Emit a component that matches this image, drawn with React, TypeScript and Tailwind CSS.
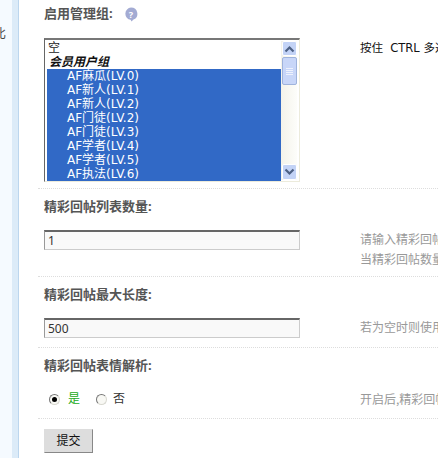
import React from "react";

const FONT = "font-['Noto_Sans','Noto_Sans_CJK_SC',sans-serif]";
const LATIN = "font-['DejaVu_Sans','Noto_Sans_CJK_SC',sans-serif]";
const groups = ["AF麻瓜(LV.0)", "AF新人(LV.1)", "AF新人(LV.2)", "AF门徒(LV.2)", "AF门徒(LV.3)", "AF学者(LV.4)", "AF学者(LV.5)", "AF执法(LV.6)"];

function Heading({ children }: { children: React.ReactNode }) {
  return <div className="flex h-9 items-center pl-1.5 text-[13px] font-bold text-[#555555]">{children}</div>;
}

function Field({ value, notes }: { value: string; notes: string[] }) {
  return (
    <div className="mt-[5px] flex pl-1.5">
      <div className="h-5 w-[256px] shrink-0 border border-t-2 border-[#cccccc] border-t-[#666666] border-l-[#999999] bg-[#f9f9f9] pl-[3px] text-xs leading-[17px] text-[#333333]">
        {value}
      </div>
      <div className="ml-[60px] whitespace-nowrap text-xs leading-5 text-[#999999]">
        {notes.map((n) => (
          <div key={n}>{n}</div>
        ))}
      </div>
    </div>
  );
}

function Radio({ checked }: { checked?: boolean }) {
  return (
    <span className="flex h-[11px] w-[11px] items-center justify-center rounded-full border border-[#d8d8d0] border-t-[#777777] border-l-[#777777] bg-[#f8f8f4]">
      {checked && <span className="h-[5px] w-[5px] rounded-full bg-black" />}
    </span>
  );
}

function Arrow({ up }: { up?: boolean }) {
  return (
    <svg width="11" height="8" viewBox="0 0 11 8">
      <path d={up ? "M1.5 6.5 L5.5 2.5 L9.5 6.5" : "M1.5 1.5 L5.5 5.5 L9.5 1.5"} fill="none" stroke="#4d6185" strokeWidth="2.2" />
    </svg>
  );
}

export default function App() {
  return (
    <div className={`${FONT} flex h-[458px] w-[438px] overflow-hidden bg-white`}>
      <div className="flex w-[19px] shrink-0 overflow-hidden bg-[#f5faff]">
        <div className="w-3 shrink-0 overflow-hidden pt-[24px] text-xs leading-5 text-[#444444]">
          <span className="-ml-[6px] block">比</span>
        </div>
        <div className="w-[7px] border-r border-[#bcd6ee] bg-[#dcebf8]" />
      </div>

      <div className="min-w-0 flex-1 pl-[19px]">
        <div className="w-[440px] border-b border-dotted border-[#dddddd] pb-1.5">
          <div className="flex h-7 items-center gap-[11px] pl-1.5 text-[13px] font-bold text-[#555555]">
            <span>启用管理组:</span>
            <svg width="14" height="15" viewBox="0 0 14 15">
              <path d="M7 0.5a6.3 6.3 0 0 1 2.5 12.1L7.5 14.6 6.6 12.8A6.2 6.2 0 0 1 7 0.5z" fill="#a3abd3" />
              <text x="7" y="10.5" textAnchor="middle" fontSize="9" fontWeight="700" fill="#ffffff">?</text>
            </svg>
          </div>
          <div className="mt-2.5 flex pl-1.5">
            <div className="flex h-[144px] w-[256px] shrink-0 border border-t-2 border-[#ecebdc] border-t-[#777777] border-l-[#666666] py-px pl-0.5 pr-[2px]">
              <div className="min-w-0 flex-1 bg-white text-xs leading-[14px]">
                <div className="h-[14px] pl-px text-[#222222]">空</div>
                <div className="h-[14px] pl-0.5 font-bold italic text-[#111111]">会员用户组</div>
                <div className={`${LATIN} h-[112px] bg-[#3169c6] pl-5 text-white`}>
                  {groups.map((g) => (
                    <div key={g} className="h-[14px] whitespace-nowrap">{g}</div>
                  ))}
                </div>
              </div>
              <div className="flex w-[16px] shrink-0 flex-col items-center bg-gradient-to-r from-[#f4f3ea] to-[#fdfdfa]">
                <div className="flex h-[15px] w-[15px] shrink-0 items-center justify-center rounded-[2px] border border-white bg-[#c3d3f6]"><Arrow up /></div>
                <div className="mt-px flex h-[28px] w-[15px] shrink-0 flex-col items-center justify-center gap-px rounded-[2px] border border-[#9fb3dc] bg-[#c8d6f8]">
                  <span className="h-px w-[7px] bg-[#eef2fd]" />
                  <span className="h-px w-[7px] bg-[#eef2fd]" />
                  <span className="h-px w-[7px] bg-[#eef2fd]" />
                  <span className="h-px w-[7px] bg-[#eef2fd]" />
                </div>
                <div className="flex-1" />
                <div className="flex h-[16px] w-[15px] shrink-0 items-center justify-center rounded-[2px] border border-white bg-[#c3d3f6]"><Arrow /></div>
              </div>
            </div>
            <div className={`${LATIN} ml-[60px] mt-[3px] whitespace-pre text-[11.5px] leading-[14px] text-[#111111]`}>按住  CTRL 多选</div>
          </div>
        </div>

        <div className="w-[440px] border-b border-dotted border-[#dddddd] pb-1.5">
          <Heading>精彩回帖列表数量:</Heading>
          <Field value="1" notes={["请输入精彩回帖列表数量", "当精彩回帖数量超过时"]} />
        </div>

        <div className="w-[440px] border-b border-dotted border-[#dddddd] pb-[9px]">
          <Heading>精彩回帖最大长度:</Heading>
          <Field value="500" notes={["若为空时则使用默认值"]} />
        </div>

        <div className="w-[440px] border-b border-dotted border-[#dddddd] pb-[9px]">
          <Heading>精彩回帖表情解析:</Heading>
          <div className="mt-[5px] flex h-5 items-center pl-[11px] text-xs">
            <Radio checked />
            <span className="ml-2 text-[#22aa22]">是</span>
            <span className="ml-4"><Radio /></span>
            <span className="ml-1.5 text-[#333333]">否</span>
            <span className="ml-[235px] whitespace-nowrap font-['Noto_Sans_CJK_SC',sans-serif] text-[#999999]">开启后,精彩回帖表情</span>
          </div>
        </div>

        <div className="pl-1.5 pt-2">
          <button className="h-6 w-[49px] border border-[#dddddd] border-r-[#888888] border-b-[#888888] bg-[#dddddd] text-xs text-[#111111]">提交</button>
        </div>
      </div>
    </div>
  );
}
